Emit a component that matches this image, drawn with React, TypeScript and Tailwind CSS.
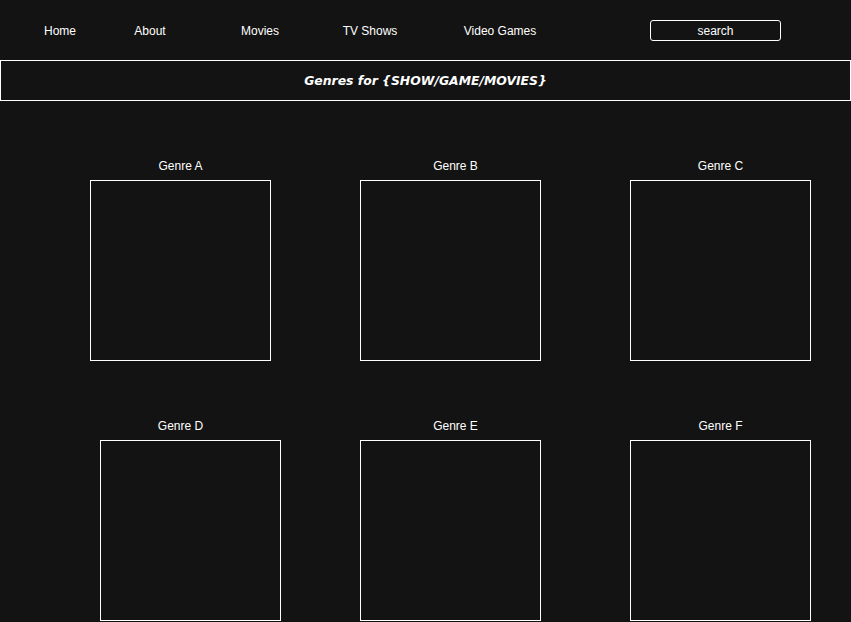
import React from "react";

const Box = () => <div className="w-[181px] h-[181px] border border-white" />;

export default function App() {
  const arial = { fontFamily: '"Liberation Sans", Arial, sans-serif' };
  return (
    <div className="w-[851px] h-[622px] overflow-hidden bg-[#131313] text-white" style={arial}>
      <nav className="h-[60px] flex items-center text-[12px] leading-[16px]">
        <div className="w-[120px] text-center pt-[2px]">Home</div>
        <div className="w-[60px] text-center pt-[2px]">About</div>
        <div className="w-[160px] text-center pt-[2px]">Movies</div>
        <div className="w-[60px] text-center pt-[2px]">TV Shows</div>
        <div className="w-[200px] text-center pt-[2px]">Video Games</div>
        <div className="ml-[50px] w-[131px] h-[21px] border border-white rounded-[3px] flex items-center justify-center pt-[1px]">
          search
        </div>
      </nav>
      <div
        className="h-[41px] border border-white flex items-center justify-center font-bold italic text-[12.4px] pt-[2px]"
        style={{ fontFamily: '"DejaVu Sans", Verdana, sans-serif' }}
      >
        Genres for {"{SHOW/GAME/MOVIES}"}
      </div>
      <div className="pt-[57px] text-[12px] leading-[16px]">
        <div className="flex">
          <div className="ml-[90px] flex flex-col">
            <div className="text-center mb-[6px]">Genre A</div>
            <Box />
          </div>
          <div className="ml-[89px] flex flex-col">
            <div className="text-center mb-[6px] pl-[10px]">Genre B</div>
            <Box />
          </div>
          <div className="ml-[89px] flex flex-col">
            <div className="text-center mb-[6px]">Genre C</div>
            <Box />
          </div>
        </div>
        <div className="flex mt-[57px]">
          <div className="ml-[100px] flex flex-col">
            <div className="text-center mb-[6px] pr-[20px]">Genre D</div>
            <Box />
          </div>
          <div className="ml-[79px] flex flex-col">
            <div className="text-center mb-[6px] pl-[10px]">Genre E</div>
            <Box />
          </div>
          <div className="ml-[89px] flex flex-col">
            <div className="text-center mb-[6px]">Genre F</div>
            <Box />
          </div>
        </div>
      </div>
    </div>
  );
}
